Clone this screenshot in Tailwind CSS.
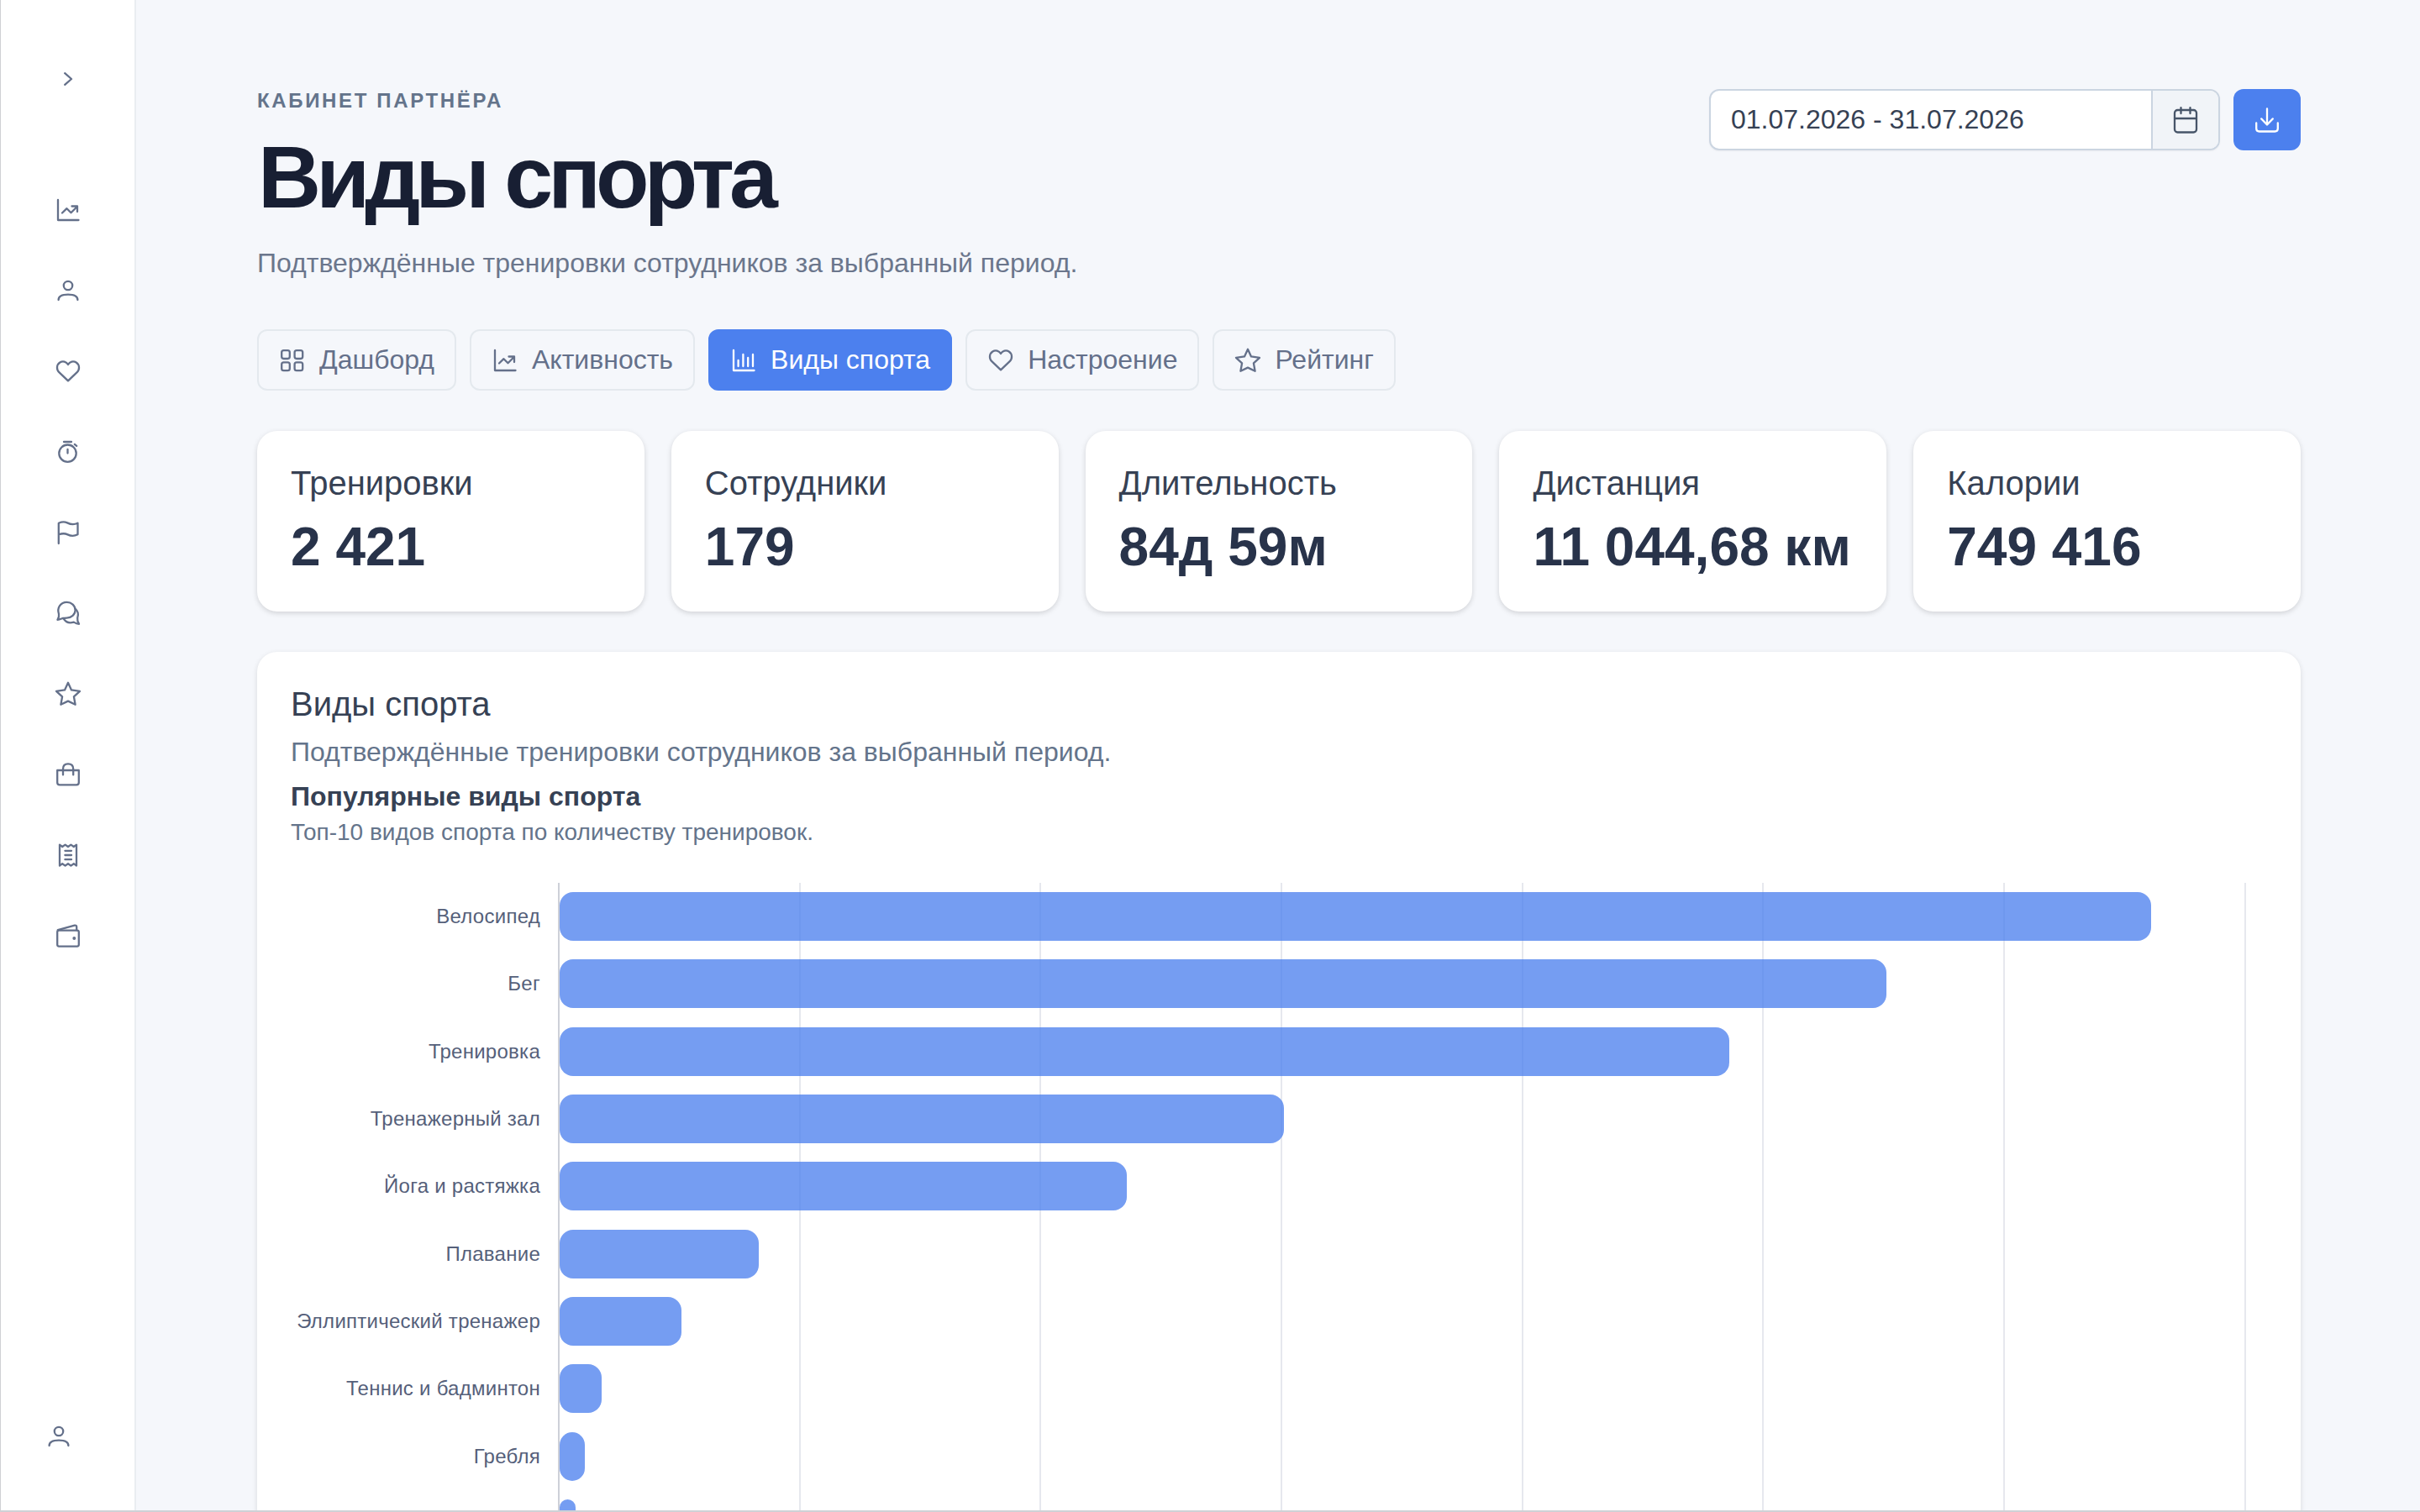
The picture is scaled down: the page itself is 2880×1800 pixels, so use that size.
<!DOCTYPE html>
<html lang="ru">
<head>
    <meta charset="UTF-8">
    <meta name="viewport" content="width=device-width, initial-scale=1.0">
    <title>Виды спорта</title>
    <script src="https://cdn.jsdelivr.net/npm/@tailwindcss/browser@4"></script>
    <style>
        body { font-family: "Liberation Sans", Arial, sans-serif; }
        svg { fill: none; stroke: currentColor; stroke-width: 2.3; stroke-linecap: round; stroke-linejoin: round; }
    </style>
</head>
<body class="relative w-[2880px] h-[1800px] overflow-hidden bg-[#f5f7fb] text-[#364154]">

    <!-- Icon sprite -->
    <svg class="hidden">
        <symbol id="i-trend" viewBox="0 0 32 32"><path d="M4 4V28H28.5M9 19.5L14.5 14.2L19.5 19.2L27 11.7M20.5 11.5H27V18"/></symbol>
        <symbol id="i-user" viewBox="0 0 32 32"><circle cx="16" cy="10" r="5.2"/><path d="M4.6 27c0-4.4 3-6.4 11.4-6.4s11.4 2 11.4 6.4"/></symbol>
        <symbol id="i-heart" viewBox="0 0 32 32"><path d="M16 27.4L5.3 17.2C1.9 13.8 2.2 8.2 6.3 5.5C9.8 3.4 14 4.6 16 8C18 4.6 22.2 3.4 25.7 5.5C29.8 8.2 30.1 13.8 26.7 17.2Z"/></symbol>
        <symbol id="i-timer" viewBox="0 0 32 32"><circle cx="15.5" cy="17.7" r="10.2"/><path d="M11 4H20M15.5 13V17.6M23.8 6.9L26.2 8.8"/></symbol>
        <symbol id="i-flag" viewBox="0 0 32 32"><path d="M4.8 29V4.7C8 3.4 11.5 2.8 15 4.4C19 6.4 22.5 7.2 27.5 4.8V18.3C22.5 20.9 19.5 20.4 15.5 18.4C12 16.6 8.5 17 4.8 18.3"/></symbol>
        <symbol id="i-chat" viewBox="0 0 32 32"><path d="M3.5 23.8C5.2 21.5 5.4 19.5 5 17C2.6 9.6 7 2.8 14.5 2.8C20 2.8 24.6 7 24.6 12.2C24.6 17.4 20 21.6 14.5 21.6C12.6 21.6 11 22 9.5 22C7.8 22.6 6 23.6 3.5 23.8Z"/><path d="M24.4 10.6C28 13.6 28.6 17.8 27.2 21.6C26.9 24.4 27.4 26.6 29 28.8C26.6 28.8 24.6 27.8 22.8 26.6C18 28.2 13.4 27 10.6 22.4"/></symbol>
        <symbol id="i-star" viewBox="0 0 32 32"><path d="M16 2.8L20 11.4L30 12.8L22.9 19.3L24.6 28.8L16 24.6L7.4 28.8L9.1 19.3L2 12.8L12 11.4Z"/></symbol>
        <symbol id="i-bag" viewBox="0 0 32 32"><path d="M3.2 11H28.8V25.6Q28.8 28.4 26 28.4H6Q3.2 28.4 3.2 25.6ZM10 16.4V9.4C10 5 12.6 3.4 16 3.4S22.2 5 22.2 9.4V16.4"/></symbol>
        <symbol id="i-receipt" viewBox="0 0 32 32"><path d="M6 3.6L9.2 6L12.6 3.6L16 6L19.4 3.6L22.8 6L26 3.6V28.6L22.8 26.2L19.4 28.6L16 26.2L12.6 28.6L9.2 26.2L6 28.6ZM12.4 10.8H20M12.4 16H20M12.4 21.2H20"/></symbol>
        <symbol id="i-wallet" viewBox="0 0 32 32"><rect x="3.2" y="9.6" width="25.6" height="19" rx="2"/><path d="M3.8 9.2L23.8 3.7Q26.2 3.2 26.2 5.6V9.4"/><circle cx="23.3" cy="19" r=".8" fill="currentColor"/></symbol>
        <symbol id="i-grid" viewBox="0 0 32 32"><rect x="3.2" y="4.2" width="9.6" height="9.8" rx="2.4"/><rect x="18.6" y="4.2" width="9.6" height="9.8" rx="2.4"/><rect x="3.2" y="18.4" width="9.6" height="9.8" rx="2.4"/><rect x="18.6" y="18.4" width="9.6" height="9.8" rx="2.4"/></symbol>
        <symbol id="i-bars" viewBox="0 0 32 32"><path d="M4 4V28H28.5M9.6 16V23M15.4 9V23M21.2 13V23M27 9V23"/></symbol>
        <symbol id="i-calendar" viewBox="0 0 32 32"><rect x="3" y="4" width="26" height="26.5" rx="3.5"/><path d="M3 14H29M10.5 1.2V8M21.5 1.2V8"/></symbol>
        <symbol id="i-download" viewBox="0 0 32 32"><path d="M16 2.5V21.5M9.2 14.4L16 21.5L22.8 14.4M3.2 19.5V26Q3.2 29.5 6.7 29.5H25.3Q28.8 29.5 28.8 26V19.5"/></symbol>
    </svg>

    <div class="flex h-full">

        <aside class="flex flex-col items-center w-[162px] h-full shrink-0 bg-white border-l border-l-[#cfd0d4] border-r-2 border-r-[#e9edf1] text-[#64708a]">
            <button class="flex items-center justify-center h-12 mt-[70px] mb-[84px]">
                <svg class="size-4" viewBox="0 0 16 16"><path d="M4.2 1.2L12 8L4.2 14.8"/></svg>
            </button>
            <nav id="menu" class="flex flex-col"></nav>
            <a href="#" class="mt-auto mb-[74px] mr-[22px]"><svg class="size-8"><use href="#i-user"/></svg></a>
        </aside>

        <main class="flex-1 h-full overflow-hidden pl-36 pr-[142px] pt-[106px]">

            <header class="flex justify-between items-start">
                <div>
                    <p class="text-2xl leading-[28px] font-bold tracking-[2.64px] text-[#64748b]">КАБИНЕТ ПАРТНЁРА</p>
                    <h1 class="ml-px mt-[25px] text-[104px] leading-none font-bold tracking-[-5.9px] text-[#181f33]">Виды спорта</h1>
                    <p class="mt-[26px] text-[32px] leading-[48px] text-[#6b768c]">Подтверждённые тренировки сотрудников за выбранный период.</p>
                </div>
                <div class="flex gap-4 h-[73px]">
                    <div class="flex w-[608px] rounded-xl border-2 border-[#cbd5e1] bg-white shadow-xs overflow-hidden">
                        <div class="flex-1 flex items-center pb-px pl-6 text-[32px]">01.07.2026 - 31.07.2026</div>
                        <div class="flex items-center justify-center w-20 border-l-2 border-[#cbd5e1] bg-[#f1f4f8] text-[#475569]">
                            <svg class="size-8"><use href="#i-calendar"/></svg>
                        </div>
                    </div>
                    <button class="flex items-center justify-center w-20 rounded-xl bg-[#4c80ee] text-white">
                        <svg class="size-8"><use href="#i-download"/></svg>
                    </button>
                </div>
            </header>

            <nav id="tabs" class="flex gap-4 mt-[55px]"></nav>

            <section id="cards" class="grid grid-cols-5 gap-8 mt-12"></section>

            <section class="mt-12 h-[1200px] rounded-3xl bg-white px-10 pt-8 shadow-[0_2px_6px_rgba(0,0,0,0.12)]">
                <h2 class="text-[40px] leading-[60px]">Виды спорта</h2>
                <p class="mt-[3px] text-[32px] leading-[48px] text-[#64748b]">Подтверждённые тренировки сотрудников за выбранный период.</p>
                <h3 class="mt-[9px] text-[32px] leading-[40px] font-bold">Популярные виды спорта</h3>
                <p class="mt-[2px] text-[28px] leading-[42px] text-[#64748b]">Топ-10 видов спорта по количеству тренировок.</p>

                <div class="relative mt-[39px] h-[803px]">
                    <div id="gridlines" class="absolute inset-y-0 left-[318px] flex"></div>
                    <div id="chart" class="relative flex flex-col"></div>
                </div>
            </section>
        </main>
    </div>

    <div class="absolute inset-x-0 bottom-0 h-[2px] bg-[#cfd1d6]"></div>

    <script>
        // Sidebar
        var menu = ['trend', 'user', 'heart', 'timer', 'flag', 'chat', 'star', 'bag', 'receipt', 'wallet'];
        document.getElementById("menu").innerHTML = menu.map(icon =>
            `<a href="#" class="flex items-center justify-center h-24"><svg class="size-8"><use href="#i-${icon}"/></svg></a>`
        ).join("");

        // Tabs
        var tabs = [
            ['grid', 'Дашборд'],
            ['trend', 'Активность'],
            ['bars', 'Виды спорта'],
            ['heart', 'Настроение'],
            ['star', 'Рейтинг']
        ];
        document.getElementById("tabs").innerHTML = tabs.map(([icon, name], i) => {
            var look = i == 2 ? "bg-[#4c80ee] border-[#4c80ee] text-white" : "border-[#e4e9ee] text-[#64708a]";
            return `<a href="#" class="flex items-center gap-4 h-[73px] px-6 rounded-xl border-2 text-[32px] whitespace-nowrap ${look}">
                <svg class="size-8"><use href="#i-${icon}"/></svg><span class="pb-[2px]">${name}</span></a>`;
        }).join("");

        // Totals
        var cards = [
            ['Тренировки', '2 421'],
            ['Сотрудники', '179'],
            ['Длительность', '84д 59м'],
            ['Дистанция', '11 044,68 км'],
            ['Калории', '749 416']
        ];
        document.getElementById("cards").innerHTML = cards.map(([name, value]) =>
            `<div class="h-[215px] rounded-3xl bg-white px-10 pt-8 shadow-[0_2px_6px_rgba(0,0,0,0.15)]">
                <p class="text-[40px] leading-[60px]">${name}</p>
                <p class="mt-[14px] text-[64px] leading-none font-bold whitespace-nowrap text-[#28334a]">${value}</p>
            </div>`
        ).join("");

        // Chart: one grid step is 100 workouts
        var step = 286.7;
        var sports = [
            ['Велосипед', 660.6], ['Бег', 550.6], ['Тренировка', 485.6], ['Тренажерный зал', 300.6], ['Йога и растяжка', 235.6],
            ['Плавание', 82.6], ['Эллиптический тренажер', 50.6], ['Теннис и бадминтон', 17.6], ['Гребля', 10.6], ['', 6.6]
        ];
        for (let i = 0; i < 8; i++) {
            var line = document.createElement("div");
            line.className = i == 0 ? "border-l-2 border-[#cdd0d8]" : "border-l-2 border-[#e6e8ee]";
            line.style.width = step + "px";
            document.getElementById("gridlines").appendChild(line);
        }
        document.getElementById("chart").innerHTML = sports.map(([name, count]) =>
            `<div class="flex items-center h-[80.3px]">
                <div class="w-[297px] mr-[23px] text-right text-2xl tracking-[0.26px] whitespace-nowrap text-[#55607a]">${name}</div>
                <div class="h-[58px] rounded-2xl bg-[#4c80ee]/77" style="width:${count * step / 100}px"></div>
            </div>`
        ).join("");
    </script>

</body>
</html>
